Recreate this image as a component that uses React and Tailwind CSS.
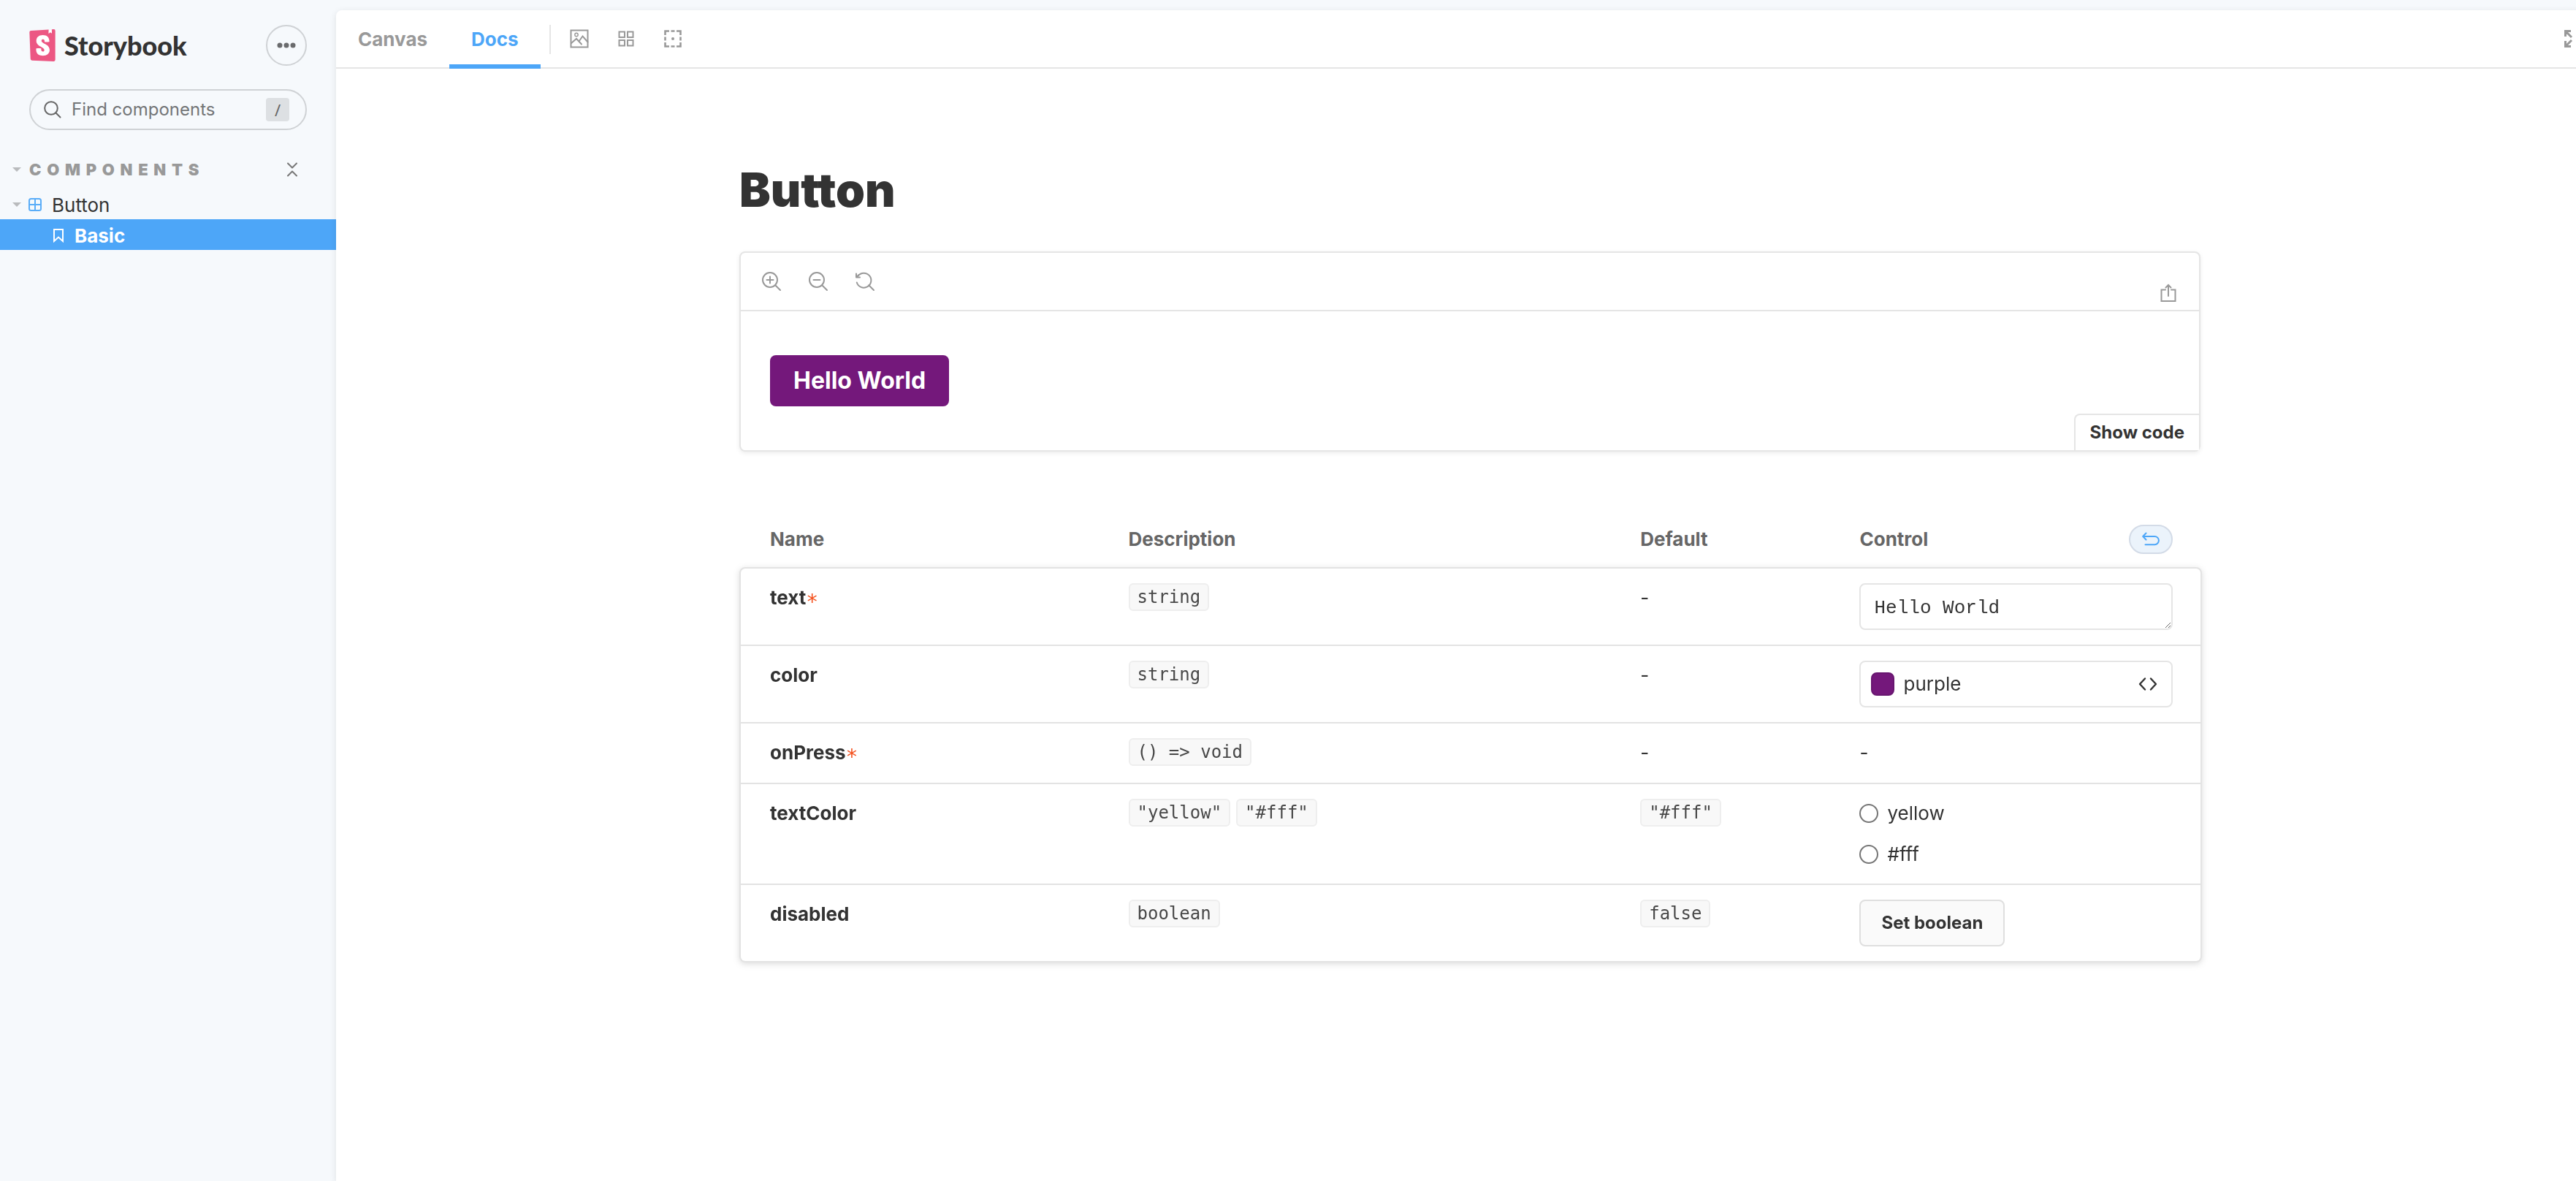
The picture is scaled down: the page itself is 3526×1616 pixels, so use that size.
import { SiStorybook } from "react-icons/si";

const stroke = {
  fill: "none",
  stroke: "currentColor",
  strokeWidth: 2,
  strokeLinecap: "round",
  strokeLinejoin: "round",
};

function Icon({ children, className = "size-7", ...rest }) {
  return (
    <svg viewBox="0 0 28 28" aria-hidden="true" className={`shrink-0 ${className}`} {...stroke} {...rest}>
      {children}
    </svg>
  );
}

function Lens({ children }) {
  return (
    <Icon>
      <circle cx="12" cy="12" r="10" />
      <path d="M19.2 19.2 26 26" />
      {children}
    </Icon>
  );
}

function Caret() {
  return (
    <svg viewBox="0 0 12 6" aria-hidden="true" className="h-1.5 w-3 shrink-0 fill-[#b9bbbd]">
      <path d="M0 0h12L6 6z" />
    </svg>
  );
}

function Code({ children }) {
  return (
    <code className="inline-block rounded-md border-2 border-[#eeeeee] bg-[#f8f8f8] px-2.5 font-['DejaVu_Sans_Mono',monospace] text-2xl leading-[34px] text-[#474747]">
      {children}
    </code>
  );
}

function Sidebar() {
  return (
    <aside className="w-[460px] shrink-0 pt-[34px]">
      <div className="flex h-14 items-center pr-10 pl-10">
        <a href="#home" className="flex items-center gap-3">
          <svg viewBox="0 0 36 44" aria-hidden="true" className="h-11 w-9 text-[#ec5783]">
            <path d="M5 4 25 2l7-1v37H6z" fill="#fff" />
            <g transform="translate(-4 0)">
              <SiStorybook size={44} />
            </g>
          </svg>
          <span className="font-['Lato',sans-serif] text-4xl leading-10 font-black text-[#333333]">
            Storybook
          </span>
        </a>
        <button
          type="button"
          aria-label="Shortcuts"
          className="ml-auto flex size-14 items-center justify-center rounded-full border-2 border-[#cfd2d5] text-[#6a6b6d]"
        >
          <Icon fill="currentColor" stroke="none">
            <circle cx="5" cy="14" r="3.5" />
            <circle cx="14" cy="14" r="3.5" />
            <circle cx="23" cy="14" r="3.5" />
          </Icon>
        </button>
      </div>

      <label className="mx-10 mt-8 flex h-14 items-center rounded-full border-2 border-[#cfd2d5] pr-[22px] pl-[18px] text-[#666666]">
        <svg viewBox="0 0 24 24" aria-hidden="true" className="size-6 shrink-0" {...stroke}>
          <circle cx="10" cy="10" r="8.8" />
          <path d="m16.5 16.5 6 6" />
        </svg>
        <input
          type="text"
          aria-label="Find components"
          placeholder="Find components"
          className="ml-3.5 min-w-0 flex-1 bg-transparent text-2xl outline-none placeholder:text-[#737577]"
        />
        <kbd className="flex size-8 items-center justify-center rounded bg-[#dde0e3] font-sans text-[22px] text-[#666666]">
          /
        </kbd>
      </label>

      <div className="mt-8 mb-1 flex h-11 items-center pr-[52px] pl-[17px]">
        <button type="button" className="flex items-center gap-[11px]">
          <Caret />
          <span className="text-[22px] leading-7 font-black tracking-[0.35em] text-[#999999] uppercase">
            Components
          </span>
        </button>
        <button type="button" aria-label="Collapse all" className="ml-auto text-[#777777]">
          <svg viewBox="0 0 16 20" aria-hidden="true" className="h-5 w-4" {...stroke}>
            <path d="m2 1.5 6 6 6-6M2 18.5l6-6 6 6" />
          </svg>
        </button>
      </div>

      <nav>
        <a href="#button" className="flex h-[42px] items-center pt-0.5 pl-[17px] text-[26px] text-[#333333]">
          <Caret />
          <svg viewBox="0 0 18 18" aria-hidden="true" className="mr-3.5 ml-2.5 size-[18px] text-[#5aadf8]" {...stroke}>
            <rect x="1" y="1" width="16" height="16" rx="2.5" />
            <path d="M9 1v16M1 9h16" />
          </svg>
          Button
        </a>
        <a
          href="#button-basic"
          className="flex h-[42px] items-center bg-[#4da6f8] pt-0.5 pl-[72px] text-[26px] font-bold text-white"
        >
          <svg viewBox="0 0 16 20" aria-hidden="true" className="mr-3.5 h-5 w-4" {...stroke} strokeLinejoin="miter">
            <path d="M2 2h12v16l-6-5.5L2 18z" />
          </svg>
          Basic
        </a>
      </nav>
    </aside>
  );
}

function Toolbar() {
  return (
    <header className="flex h-20 items-stretch border-b-2 border-[#e5e5e5] text-[#999999]">
      <button type="button" className="px-[30px] text-[26px] font-bold">
        Canvas
      </button>
      <button
        type="button"
        className="relative px-[30px] text-[26px] font-bold text-[#4da6f8] after:absolute after:inset-x-0 after:-bottom-0.5 after:h-1.5 after:bg-[#4da6f8]"
      >
        Docs
      </button>
      <span className="mt-5 ml-3 h-10 w-0.5 bg-[#e5e5e5]" />
      <div className="flex items-center gap-9 pl-[25px]">
        <button type="button" aria-label="Change background">
          <Icon strokeLinejoin="miter">
            <rect x="2.5" y="2.5" width="23" height="23" />
            <circle cx="10" cy="8.5" r="2.2" strokeWidth="1.4" />
            <path d="m3 20 7-6 7 7.5M13.5 17.5l5-7 7 8" />
          </Icon>
        </button>
        <button type="button" aria-label="Apply a grid">
          <Icon strokeLinejoin="miter">
            <path d="M4.500 4.500h7.500v7.500H4.500zM16 4.500h7.500v7.500H16zM4.500 16h7.500v7.500H4.500zM16 16h7.500v7.500H16z" />
          </Icon>
        </button>
        <button type="button" aria-label="Enable outline">
          <Icon strokeLinecap="butt" strokeLinejoin="miter" strokeWidth="2.6">
            <path d="M3.5 9V3.5H9M19 3.5h5.500V9M24.500 19v5.500H19M9 24.500H3.500V19M11.500 3.500h5M11.500 24.500h5M3.500 11.500v5M24.500 11.500v5" />
            <circle cx="14" cy="14" r="2" fill="currentColor" stroke="none" />
          </Icon>
        </button>
      </div>
      <button type="button" aria-label="Go full screen" className="mr-[26px] ml-auto">
        <Icon strokeWidth="3" strokeLinecap="butt" strokeLinejoin="miter">
          <path d="M1.500 11V3.500H9M2 4l8 8M1.500 17v7.500H9M2 24l8-8M26.500 11V3.500H19M26 4l-8 8M26.500 17v7.500H19M26 24l-8-8" />
        </Icon>
      </button>
    </header>
  );
}

function Preview() {
  return (
    <section className="relative rounded-lg border-2 border-[#e5e5e5] bg-white shadow-[0_2px_6px_rgba(0,0,0,0.08)]">
      <div className="flex h-20 items-center gap-9 border-b-2 border-[#e5e5e5] pr-[30px] pl-7 text-[#999999]">
        <button type="button" aria-label="Zoom in">
          <Lens>
            <path d="M7.500 12h9M12 7.500v9" />
          </Lens>
        </button>
        <button type="button" aria-label="Zoom out">
          <Lens>
            <path d="M7.500 12h9" />
          </Lens>
        </button>
        <button type="button" aria-label="Reset zoom">
          <Icon>
            <path d="M4.500 6.500A10 10 0 1 1 2.800 15.500" />
            <path d="m19.200 19.200 6.800 6.800" />
            <path d="M2 3.500v5h5L2 8.500z M2.500 8l3-3" />
          </Icon>
        </button>
        <button type="button" aria-label="Open in new tab" className="mt-8 ml-auto">
          <svg viewBox="0 0 24 26" aria-hidden="true" className="h-[26px] w-6" {...stroke} strokeLinejoin="miter">
            <path d="M8 8.500H2.500V24h19V8.500H16" />
            <path d="M12 17V2.500M8.500 5.500 12 2l3.500 3.500" />
          </svg>
        </button>
      </div>
      <div className="px-10 py-[60px]">
        <button type="button" className="block rounded-lg bg-[#74187b] px-8 text-[32px] leading-[70px] font-bold text-white">
          Hello World
        </button>
      </div>
      <button
        type="button"
        className="absolute right-0 bottom-0 h-[50px] rounded-tl-lg border-t-2 border-l-2 border-[#e5e5e5] bg-white px-5 text-2xl font-bold text-[#333333]"
      >
        Show code
      </button>
    </section>
  );
}

function Required() {
  return (
    <span
      title="Required"
      className="align-sub font-['DejaVu_Sans_Mono',monospace] text-[28px] leading-none font-normal text-[#f4511e]"
    >
      *
    </span>
  );
}

function RadioOption({ label }) {
  return (
    <label className="flex h-10 items-center gap-3">
      <input
        type="radio"
        name="textColor"
        className="size-[26px] appearance-none rounded-full border-2 border-[#767676] bg-white checked:border-8 checked:border-[#1ea7fd]"
      />
      {label}
    </label>
  );
}

const rows = [
  {
    name: "text",
    required: true,
    types: ["string"],
    control: (
      <textarea
        aria-label="text"
        rows={1}
        defaultValue="Hello World"
        className="block h-16 w-full resize-y overflow-hidden rounded-lg border-2 border-[#e5e5e5] bg-white px-[18px] py-3 font-['Liberation_Mono',monospace] text-[26px] leading-10 outline-none"
      />
    ),
  },
  {
    name: "color",
    types: ["string"],
    control: (
      <div className="flex h-16 items-center rounded-lg border-2 border-[#e5e5e5] pr-[18px] pl-3.5">
        <button type="button" aria-label="Pick a color" className="size-8 shrink-0 rounded-lg border-2 border-[#681670] bg-[#74187b]" />
        <input aria-label="color" type="text" defaultValue="purple" className="ml-3 min-w-0 flex-1 outline-none" />
        <button type="button" aria-label="Change color format">
          <Icon strokeWidth="2.4">
            <path d="M10 6.500 3 14l7 7.500M18 6.500l7 7.500-7 7.500" />
          </Icon>
        </button>
      </div>
    ),
  },
  { name: "onPress", required: true, types: ["() => void"], control: "-" },
  {
    name: "textColor",
    types: ['"yellow"', '"#fff"'],
    value: '"#fff"',
    control: (
      <div className="flex flex-col gap-4">
        <RadioOption label="yellow" />
        <RadioOption label="#fff" />
      </div>
    ),
  },
  {
    name: "disabled",
    types: ["boolean"],
    value: "false",
    control: (
      <button type="button" className="block h-16 rounded-lg border-2 border-[#dfdfdf] bg-[#fafafa] px-7 text-2xl font-bold">
        Set boolean
      </button>
    ),
  },
];

function ArgsTable() {
  return (
    <table className="mt-20 -mr-0.5 w-[calc(100%+2px)] table-fixed border-separate border-spacing-0 text-left text-[26px] leading-10 text-[#333333]">
      <colgroup>
        <col className="w-[25%]" />
        <col className="w-[35%]" />
        <col className="w-[15%]" />
        <col className="w-[25%]" />
      </colgroup>
      <thead className="text-[#666666]">
        <tr>
          <th className="pt-5 pr-8 pb-[18px] pl-[42px]">Name</th>
          <th className="px-8 pt-5 pb-[18px]">Description</th>
          <th className="px-8 pt-5 pb-[18px]">Default</th>
          <th className="pt-5 pr-10 pb-[18px] pl-8">
            <div className="flex items-center justify-between">
              Control
              <button
                type="button"
                aria-label="Reset controls"
                className="flex h-10 w-[60px] items-center justify-center rounded-full border-2 border-[#d3dbe7] bg-[#ebf3fb] text-[#4da6f8]"
              >
                <svg viewBox="0 0 24 20" aria-hidden="true" className="h-5 w-6" {...stroke}>
                  <path d="M5.500 1.500 1.200 6l4.300 4.500M1.500 6h15.800a5.600 5.600 0 0 1 0 11.200H4.500" />
                </svg>
              </button>
            </div>
          </th>
        </tr>
      </thead>
      <tbody className="drop-shadow-[0_2px_4px_rgba(0,0,0,0.14)] [&>tr:first-child>td:last-child]:rounded-tr-lg [&>tr:first-child>th]:rounded-tl-lg [&>tr:last-child>*]:border-b-2 [&>tr:last-child>td:last-child]:rounded-br-lg [&>tr:last-child>th]:rounded-bl-lg">
        {rows.map((row) => (
          <tr key={row.name} className="align-top [&>*]:border-t-2 [&>*]:border-[#e3e3e3] [&>*]:bg-white [&>*]:py-5">
            <th scope="row" className="border-l-2 pr-8 pl-10 font-bold">
              {row.name}
              {row.required && <Required />}
            </th>
            <td className="px-8">
              <div className="flex min-h-[41px] items-start gap-2">
                {row.types.map((type) => (
                  <Code key={type}>{type}</Code>
                ))}
              </div>
            </td>
            <td className="px-8">
              {row.value ? (
                <div className="flex items-start">
                  <Code>{row.value}</Code>
                </div>
              ) : (
                "-"
              )}
            </td>
            <td className="border-r-2 pr-[38px] pl-8">{row.control}</td>
          </tr>
        ))}
      </tbody>
    </table>
  );
}

export default function App() {
  return (
    <div className="flex min-h-screen overflow-hidden bg-[#f6f9fc] font-['Inter',sans-serif]">
      <Sidebar />
      <main className="mt-3.5 -mr-[38px] min-w-0 flex-1 rounded-tl-lg bg-white shadow-[0_2px_10px_rgba(0,0,0,0.1)]">
        <Toolbar />
        <div className="mx-auto max-w-[2000px] pt-32 pb-32">
          <h1 className="mb-[46px] text-[64px] leading-[76px] font-black text-[#333333]">Button</h1>
          <Preview />
          <ArgsTable />
        </div>
      </main>
    </div>
  );
}
